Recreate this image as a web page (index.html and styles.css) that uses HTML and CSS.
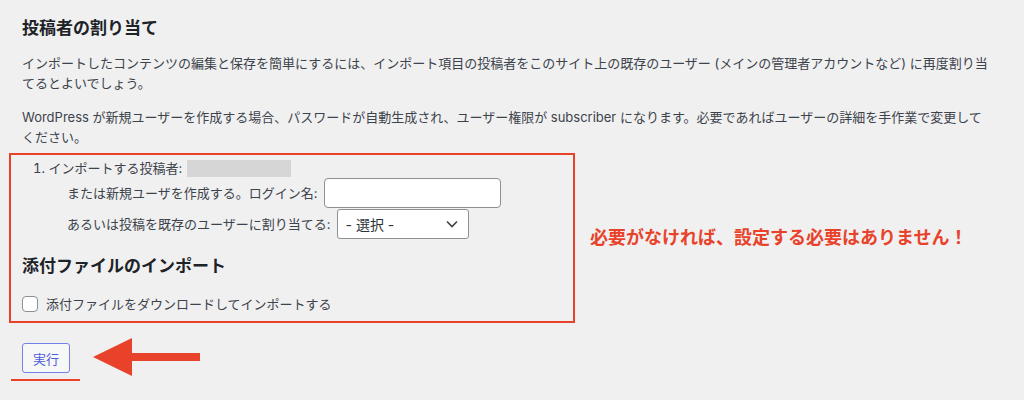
FILE: index.html
```html
<!DOCTYPE html>
<html lang="ja">
<head>
<meta charset="utf-8">
<title>投稿者の割り当て</title>
<link rel="stylesheet" href="styles.css">
</head>
<body>
<div class="wrap">
  <h2 class="title">投稿者の割り当て</h2>
  <p class="desc">インポートしたコンテンツの編集と保存を簡単にするには、インポート項目の投稿者をこのサイト上の既存のユーザー (メインの管理者アカウントなど) に再度割り当てるとよいでしょう。</p>
  <p class="desc">WordPress が新規ユーザーを作成する場合、パスワードが自動生成され、ユーザー権限が subscriber になります。必要であればユーザーの詳細を手作業で変更してください。</p>

  <div class="annotated">
    <div class="highlight">
      <ol class="authors">
        <li class="author">
          <div class="author-row">インポートする投稿者: <span class="redacted"></span></div>
          <div class="sub-row">または新規ユーザを作成する。ログイン名: <input class="text-input" type="text"></div>
          <div class="sub-row sub-row-select">あるいは投稿を既存のユーザーに割り当てる: <span class="select-wrap"><select class="select"><option>- 選択 -</option></select><svg class="chevron" viewBox="0 0 12 8" width="12" height="8"><path d="M1 1.5 6 6.5 11 1.5" fill="none" stroke="#3c434a" stroke-width="1.6"/></svg></span></div>
        </li>
      </ol>
      <h3 class="subtitle">添付ファイルのインポート</h3>
      <label class="check-row"><input class="checkbox" type="checkbox"> 添付ファイルをダウンロードしてインポートする</label>
    </div>
    <div class="note">必要がなければ、設定する必要はありません！</div>
  </div>

  <div class="submit-row">
    <div class="submit-mark"><button class="button" type="button">実行</button></div>
    <svg class="arrow" width="112" height="42" viewBox="0 0 112 42"><polygon points="3,21 42,2 42,17 110,17 110,25 42,25 42,40" fill="#e8432a"/></svg>
  </div>
</div>
</body>
</html>
```

FILE: styles.css
```css
html, body {
  margin: 0;
  padding: 0;
  background: #f0f0f1;
}
body {
  font-family: Inter, "Noto Sans CJK JP", sans-serif;
  font-size: 13px;
  color: #3c434a;
  width: 1024px;
  height: 400px;
  overflow: hidden;
}
.wrap {
  padding: 17px 0 0 22px;
}
.title {
  font-size: 17px;
  line-height: 22px;
  font-weight: 700;
  color: #1d2327;
  margin: 0;
}
.desc {
  margin: 14px 0 0;
  line-height: 20px;
  max-width: 968px;
}
.annotated {
  display: flex;
  align-items: center;
  margin: 6px 0 0 -13px;
}
.highlight {
  width: 541px;
  border: 2px solid #e8432a;
  padding: 3px 10px 7px 11px;
}
.authors {
  list-style: decimal inside;
  margin: 0;
  padding: 0 0 0 11px;
}
.author-row {
  display: inline;
  line-height: 20px;
}
.author::marker {
  content: "1. ";
}
.redacted {
  display: inline-block;
  width: 104px;
  height: 17px;
  background: #d6d6d7;
  vertical-align: -4px;
  margin-left: 1px;
}
.sub-row {
  display: flex;
  align-items: center;
  gap: 6px;
  margin-left: 34px;
  line-height: 20px;
}
.sub-row-select {
  margin-top: 1px;
}
.text-input {
  box-sizing: border-box;
  width: 177px;
  height: 30px;
  border: 1px solid #8c8f94;
  border-radius: 4px;
  background: #fff;
  margin: 0;
  padding: 0 8px;
  font: inherit;
}
.select-wrap {
  position: relative;
  display: inline-block;
}
.select {
  appearance: none;
  -webkit-appearance: none;
  box-sizing: border-box;
  width: 132px;
  height: 30px;
  border: 1px solid #8c8f94;
  border-radius: 3px;
  background: #fff;
  margin: 0;
  padding: 0 24px 0 8px;
  font-family: Inter, "Noto Sans CJK JP", sans-serif;
  font-size: 14px;
  color: #2c3338;
}
.chevron {
  position: absolute;
  right: 11px;
  top: 11px;
  pointer-events: none;
}
.subtitle {
  font-size: 17px;
  line-height: 22px;
  font-weight: 700;
  color: #1d2327;
  margin: 16px 0 0;
}
.check-row {
  display: flex;
  align-items: center;
  gap: 8px;
  margin-top: 17px;
  line-height: 20px;
}
.checkbox {
  appearance: none;
  -webkit-appearance: none;
  box-sizing: border-box;
  width: 16px;
  height: 16px;
  margin: 0;
  border: 1px solid #8c8f94;
  border-radius: 4px;
  background: #fff;
}
.note {
  margin-left: 15px;
  font-size: 18px;
  font-weight: 700;
  color: #e8432a;
  line-height: 24px;
}
.submit-row {
  display: flex;
  align-items: flex-start;
  margin: 20px 0 0 -11px;
}
.submit-mark {
  padding: 0 10px 6px 11px;
  border-bottom: 2px solid #e8432a;
}
.button {
  box-sizing: border-box;
  width: 48px;
  height: 30px;
  border: 1px solid #7481e4;
  border-radius: 3px;
  background: #f6f7f7;
  color: #4b5bd7;
  font-family: Inter, "Noto Sans CJK JP", sans-serif;
  font-size: 13px;
  padding: 0;
  margin: 0;
  display: block;
}
.arrow {
  display: block;
  margin: -7px 0 0 10px;
}
```
